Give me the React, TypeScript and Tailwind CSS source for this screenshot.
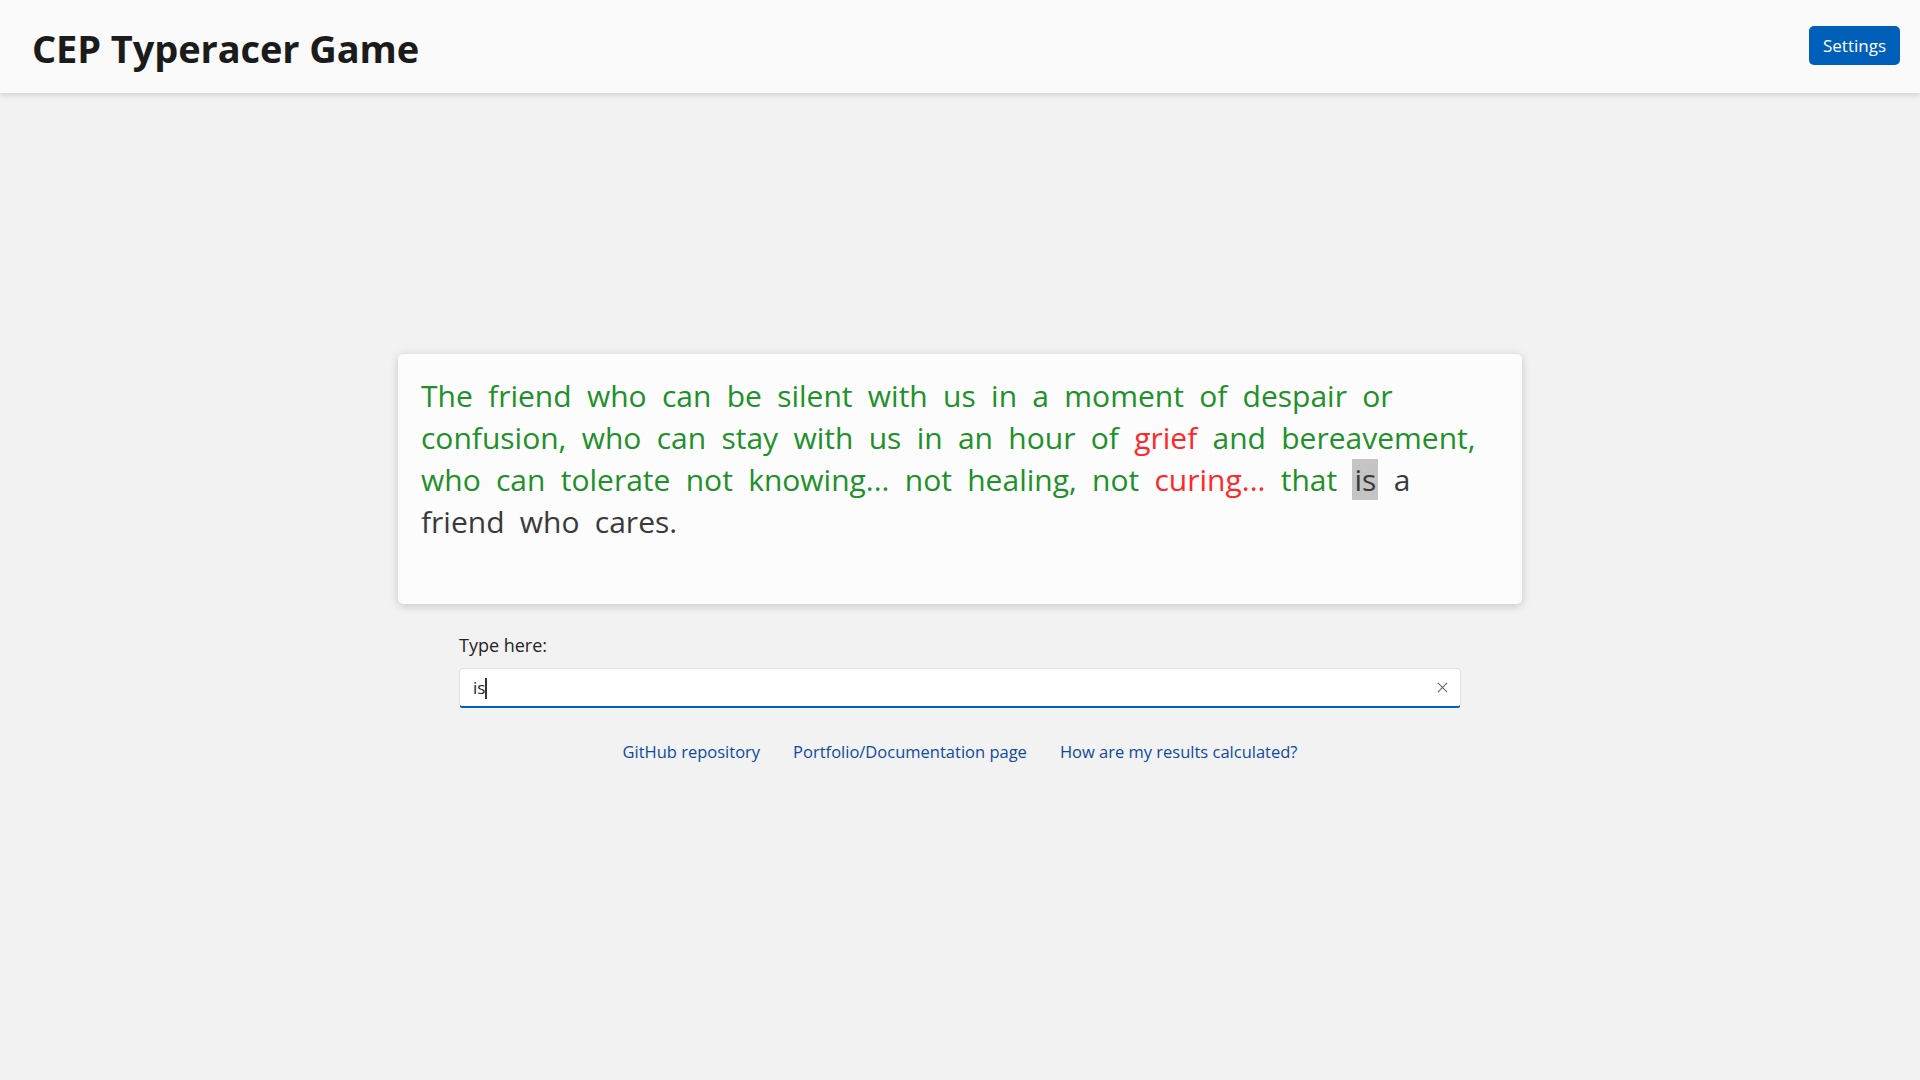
import React, { useState } from 'react';

type WordState = 'correct' | 'wrong' | 'current' | 'pending';

const QUOTE =
  'The friend who can be silent with us in a moment of despair or confusion, who can stay with us in an hour of grief and bereavement, who can tolerate not knowing... not healing, not curing... that is a friend who cares.';

// word indexes typed wrong, and the one being typed now
const WRONG = new Set([24, 35]);
const CURRENT = 37;

const stateOf = (i: number): WordState => {
  if (i === CURRENT) return 'current';
  if (i > CURRENT) return 'pending';
  return WRONG.has(i) ? 'wrong' : 'correct';
};

const wordClass: Record<WordState, string> = {
  correct: 'text-[#21902a]',
  wrong: 'text-[#ff2828]',
  current: 'text-[#3a3a3a] bg-[#c4c4c4]',
  pending: 'text-[#3a3a3a]',
};

const App: React.FC = () => {
  const [typed, setTyped] = useState<string>('is');
  const words = QUOTE.split(' ');

  return (
    <div
      className="min-h-screen bg-[#f2f2f2]"
      style={{ fontFamily: '"Open Sans", "Noto Sans", sans-serif' }}
    >
      {/* Header */}
      <header className="h-[93px] bg-[#fafafa] shadow-[0_2px_6px_rgba(0,0,0,0.14)] flex items-center justify-between pl-[32px] pr-[20px]">
        <h1 className="text-[38px] font-bold text-[#1b1b1b] tracking-[-0.1px] leading-none mt-[2px]">
          CEP Typeracer Game
        </h1>
        <button className="h-[39px] px-[14px] rounded-[5px] bg-[#005fb8] text-white text-[17px] -mt-[2px]">
          Settings
        </button>
      </header>

      <main className="flex flex-col items-center pt-[261px]">
        {/* Quote card */}
        <div className="w-[1124px] h-[250px] bg-[#fcfcfc] rounded-[5px] shadow-[0_2px_10px_rgba(0,0,0,0.18)] px-[23px] pt-[21px]">
          <p className="text-[30px] font-medium leading-[42px] [word-spacing:7.5px]">
            {words.map((w, i) => (
              <React.Fragment key={i}>
                <span className={`${wordClass[stateOf(i)]} ${i === CURRENT ? 'px-[2px]' : ''}`}>{w}</span>
                {i < words.length - 1 ? ' ' : ''}
              </React.Fragment>
            ))}
          </p>
        </div>

        {/* Input */}
        <div className="w-[1002px] mt-[28px]">
          <label className="block text-[18px] text-[#242424] mb-[9px]">Type here:</label>
          <div className="relative h-[40px] bg-white rounded-[4px] border border-[#e3e3e3] border-b-2 border-b-[#005fb8] flex items-center">
            <input
              value={typed}
              onChange={(e) => setTyped(e.target.value)}
              className="flex-1 h-full bg-transparent outline-none px-[13px] text-[17px] text-[#242424]"
            />
            <span className="absolute left-[25px] top-[9px] w-[1.5px] h-[21px] bg-[#333]" />
            <button className="w-[36px] h-full flex items-center justify-center text-[#6b6b6b]">
              <svg width="11" height="11" viewBox="0 0 12 12" fill="none" stroke="currentColor" strokeWidth="1.3">
                <path d="M1 1l10 10M11 1L1 11" />
              </svg>
            </button>
          </div>
        </div>

        {/* Links */}
        <nav className="flex gap-[33px] mt-[32px] text-[16.5px] text-[#0f4aa0]">
          <a href="#">GitHub repository</a>
          <a href="#">Portfolio/Documentation page</a>
          <a href="#">How are my results calculated?</a>
        </nav>
      </main>
    </div>
  );
};

export default App;
